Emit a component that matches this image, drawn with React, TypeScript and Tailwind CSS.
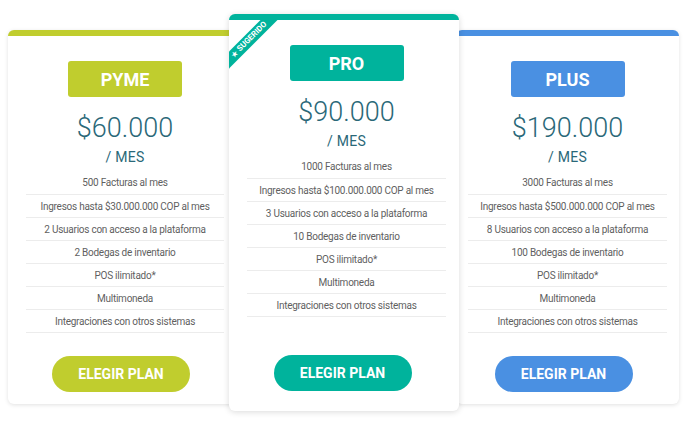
import React from "react";

type Plan = {
  name: string;
  price: string;
  features: string[];
  color: string;
};

const plans: Plan[] = [
  {
    name: "PYME",
    price: "$60.000",
    color: "#c0cd2e",
    features: [
      "500 Facturas al mes",
      "Ingresos hasta $30.000.000 COP al mes",
      "2 Usuarios con acceso a la plataforma",
      "2 Bodegas de inventario",
      "POS ilimitado*",
      "Multimoneda",
      "Integraciones con otros sistemas",
    ],
  },
  {
    name: "PRO",
    price: "$90.000",
    color: "#00b39c",
    features: [
      "1000 Facturas al mes",
      "Ingresos hasta $100.000.000 COP al mes",
      "3 Usuarios con acceso a la plataforma",
      "10 Bodegas de inventario",
      "POS ilimitado*",
      "Multimoneda",
      "Integraciones con otros sistemas",
    ],
  },
  {
    name: "PLUS",
    price: "$190.000",
    color: "#4a90e2",
    features: [
      "3000 Facturas al mes",
      "Ingresos hasta $500.000.000 COP al mes",
      "8 Usuarios con acceso a la plataforma",
      "100 Bodegas de inventario",
      "POS ilimitado*",
      "Multimoneda",
      "Integraciones con otros sistemas",
    ],
  },
];

const PlanBody = ({ plan, featured }: { plan: Plan; featured?: boolean }) => (
  <>
    {/* Badge */}
    <div
      className="mx-auto mt-[25px] flex h-[36px] w-[114px] items-center justify-center rounded-[3px] text-[18px] font-bold text-white"
      style={{ backgroundColor: plan.color }}
    >
      {plan.name}
    </div>

    {/* Price */}
    <div className="mt-[15px] text-center text-[27px] font-light leading-[32px] text-[#2a6878]">
      {plan.price}
    </div>
    <div className="mt-[4px] text-center text-[14px] leading-[18px] tracking-[0.3px] text-[#2a6878]">
      / MES
    </div>

    {/* Features */}
    <ul className="mt-[5px]">
      {plan.features.map((f, i) => (
        <li
          key={f}
          className={
            "flex h-[23px] items-center justify-center text-[10px] tracking-[-0.25px] text-[#5f5f5f] " +
            (i > 0 ? "border-t border-[#ececec]" : "")
          }
        >
          {f}
        </li>
      ))}
    </ul>
    <div className="border-t border-[#ececec]" />

    <div
      className={
        "flex justify-center pr-[8px] " +
        (featured ? "mt-[38px] pb-[20px]" : "mt-[23px] pb-[12px]")
      }
    >
      <button
        className="h-[36px] w-[138px] rounded-full text-[14px] font-bold text-white"
        style={{ backgroundColor: plan.color }}
      >
        ELEGIR PLAN
      </button>
    </div>
  </>
);

export default function App() {
  const [pyme, pro, plus] = plans;
  return (
    <div
      className="h-[425px] w-[688px] bg-white"
      style={{ fontFamily: "Roboto, 'Liberation Sans', sans-serif" }}
    >
      <div className="flex items-start px-[8px]">
        {/* PYME */}
        <div className="mt-[30px] w-[234px] rounded-md border-t-[6px] border-[#c0cd2e] bg-white pl-[18px] pr-[18px] shadow-[0_1px_4px_rgba(0,0,0,0.12)]">
          <PlanBody plan={pyme} />
        </div>

        {/* PRO */}
        <div className="relative z-10 -ml-[13px] mt-[14px] w-[230px] overflow-hidden rounded-md border-t-[6px] border-[#00b39c] bg-white pl-[18px] pr-[13px] shadow-[0_1px_6px_rgba(0,0,0,0.15)]">
          <div className="absolute left-[-30px] top-[14px] flex h-[12px] w-[100px] -rotate-45 items-center justify-center gap-[3px] bg-[#00b39c] text-[8px] font-bold leading-none text-white">
            <span className="text-[7px]">★</span>
            <span>SUGERIDO</span>
          </div>
          <PlanBody plan={pro} featured />
        </div>

        {/* PLUS */}
        <div className="-ml-[3px] mt-[30px] w-[223px] rounded-md border-t-[6px] border-[#4a90e2] bg-white px-[12px] shadow-[0_1px_4px_rgba(0,0,0,0.12)]">
          <PlanBody plan={plus} />
        </div>
      </div>
    </div>
  );
}
